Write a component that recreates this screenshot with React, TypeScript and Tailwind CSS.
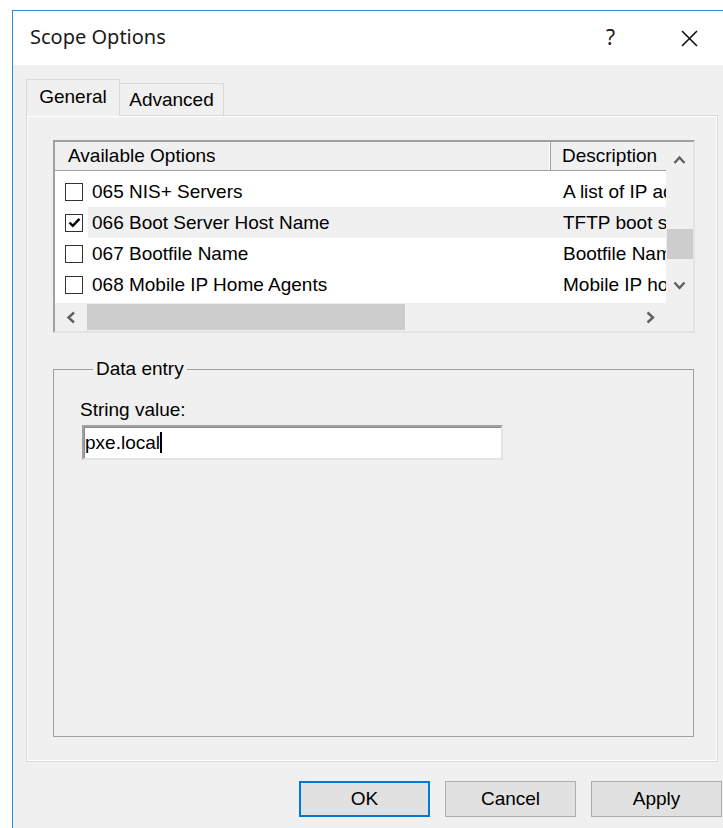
import React from "react";

type Dir = "up" | "down" | "left" | "right";

const options = [
  { name: "065 NIS+ Servers", desc: "A list of IP addresses", checked: false, selected: false },
  { name: "066 Boot Server Host Name", desc: "TFTP boot server host name", checked: true, selected: true },
  { name: "067 Bootfile Name", desc: "Bootfile Name", checked: false, selected: false },
  { name: "068 Mobile IP Home Agents", desc: "Mobile IP home agents", checked: false, selected: false },
];

const sans = "font-['Liberation_Sans',Arial,sans-serif]";

function Chevron({ dir }: { dir: Dir }) {
  const vertical = dir === "up" || dir === "down";
  const points = {
    up: "1.5,8 6.5,2.5 11.5,8",
    down: "1.5,1.5 6.5,7 11.5,1.5",
    left: "8,1.5 2.5,6.5 8,11.5",
    right: "1.5,1.5 7,6.5 1.5,11.5",
  }[dir];
  return (
    <svg
      width={vertical ? 13 : 10}
      height={vertical ? 10 : 13}
      viewBox={vertical ? "0 0 13 10" : "0 0 10 13"}
      className="block"
    >
      <polyline points={points} fill="none" stroke="#606060" strokeWidth="2.4" />
    </svg>
  );
}

function CheckBox({ checked }: { checked: boolean }) {
  return (
    <div className="flex h-[18px] w-[18px] shrink-0 items-center justify-center border-[1.5px] border-[#333] bg-white">
      {checked && (
        <svg width="13" height="11" viewBox="0 0 13 11">
          <polyline points="1.5,5.5 4.8,8.8 11.5,1.8" fill="none" stroke="#000" strokeWidth="2.4" />
        </svg>
      )}
    </div>
  );
}

function OptionsList() {
  return (
    <div className="flex h-[193px] w-[642px] border-2 border-t-[#a0a0a0] border-l-[#a0a0a0] border-r-[#e3e3e3] border-b-[#e3e3e3] shadow-[inset_1px_1px_0_#696969]">
      <div className="flex w-[611px] shrink-0 flex-col overflow-hidden">
        {/* column headers */}
        <div className="flex h-[29px] shrink-0 border-b border-[#a0a0a0] bg-[#f0f0f0]">
          <div className="flex w-[496px] shrink-0 items-center border-r border-[#a0a0a0] pl-[13px] shadow-[inset_-1px_0_0_#fff]">
            Available Options
          </div>
          <div className="flex min-w-0 flex-1 items-center overflow-hidden whitespace-nowrap pl-[11px]">Description</div>
        </div>

        <div className="flex h-[132px] shrink-0 flex-col bg-white pt-[5px]">
          {options.map((opt) => (
            <div key={opt.name} className="flex h-[31px] items-center">
              <div className="flex w-[33px] shrink-0 pl-[10px]">
                <CheckBox checked={opt.checked} />
              </div>
              <div
                className={`flex h-full min-w-0 flex-1 items-center overflow-hidden ${
                  opt.selected ? "bg-[#f0f0f0]" : ""
                }`}
              >
                <div className="w-[463px] shrink-0 whitespace-nowrap pl-[4px]">{opt.name}</div>
                <div className="min-w-0 flex-1 overflow-hidden whitespace-nowrap pl-[12px]">{opt.desc}</div>
              </div>
            </div>
          ))}
        </div>

        {/* horizontal scroll bar */}
        <div className="flex h-[28px] shrink-0 items-stretch bg-[#f0f0f0]">
          <div className="flex w-[32px] items-center justify-center">
            <Chevron dir="left" />
          </div>
          <div className="my-[1px] w-[318px] bg-[#cdcdcd]" />
          <div className="flex-1" />
          <div className="flex w-[30px] items-center justify-center">
            <Chevron dir="right" />
          </div>
        </div>
      </div>

      {/* vertical scroll bar */}
      <div className="flex min-w-0 flex-1 flex-col bg-[#f0f0f0]">
        <div className="flex h-[161px] flex-col">
          <div className="flex h-[35px] items-center justify-center">
            <Chevron dir="up" />
          </div>
          <div className="flex-1">
            <div className="ml-[1px] mt-[52px] h-[30px] bg-[#cdcdcd]" />
          </div>
          <div className="flex h-[35px] items-center justify-center">
            <Chevron dir="down" />
          </div>
        </div>
      </div>
    </div>
  );
}

function DialogButton({ label, primary }: { label: string; primary?: boolean }) {
  return (
    <button
      className={`flex h-[36px] w-[131px] items-center justify-center bg-[#e1e1e1] ${
        primary ? "border-2 border-[#0078d7]" : "border border-[#adadad]"
      }`}
    >
      {label}
    </button>
  );
}

export default function App() {
  return (
    <div className={`h-[828px] w-[723px] overflow-hidden bg-white pl-[12px] pt-[10px] text-[19px] leading-[22px] text-black ${sans}`}>
      <div className="flex h-[818px] w-[711px] flex-col border-l border-t border-[#2b8ad8] bg-[#f0f0f0]">
        {/* title bar */}
        <div className="flex h-[54px] shrink-0 items-center bg-white pl-[17px] font-['Noto_Sans',sans-serif] text-[20px] text-[#1a1a1a]">
          <span className="pb-[2px]">Scope Options</span>
          <span className="ml-auto pb-[2px] text-[21px]">?</span>
          <svg width="17" height="17" viewBox="0 0 17 17" className="ml-[66px] mr-[25px]">
            <path d="M1 1 L16 16 M16 1 L1 16" stroke="#111" strokeWidth="1.6" />
          </svg>
        </div>

        {/* tabs */}
        <div className="ml-[13px] mt-[14px] flex h-[36px] items-end">
          <div className="relative z-10 -mb-px flex h-[37px] w-[94px] items-center justify-center border-l border-r border-t border-[#d9d9d9] bg-[#f0f0f0] pb-[2px]">
            General
          </div>
          <div className="flex h-[32px] w-[104px] items-center justify-center border-r border-t border-[#d9d9d9] bg-[#f0f0f0]">
            Advanced
          </div>
        </div>

        {/* tab page */}
        <div className="ml-[13px] flex h-[647px] w-[692px] flex-col border border-[#d9d9d9] pl-[26px] pt-[24px] shadow-[inset_1px_1px_0_#fff,inset_-1px_-1px_0_#fff]">
          <OptionsList />

          <fieldset className="mt-[25px] h-[379px] w-[641px] border border-[#a0a0a0] pl-[26px]">
            <legend className="ml-[13px] px-[3px]">Data entry</legend>
            <div className="mt-[19px]">String value:</div>
            <div className="ml-[2px] mt-[4px] flex h-[35px] w-[421px] items-center border-2 border-t-[#a0a0a0] border-l-[#a0a0a0] border-r-[#e3e3e3] border-b-[#e3e3e3] bg-white pl-[1px] shadow-[inset_1px_1px_0_#8a8a8a]">
              <span>pxe.local</span>
              <span className="h-[21px] w-[2px] bg-black" />
            </div>
          </fieldset>
        </div>

        {/* dialog buttons */}
        <div className="mt-[19px] flex justify-end gap-[15px] pr-[1px]">
          <DialogButton label="OK" primary />
          <DialogButton label="Cancel" />
          <DialogButton label="Apply" />
        </div>
      </div>
    </div>
  );
}
